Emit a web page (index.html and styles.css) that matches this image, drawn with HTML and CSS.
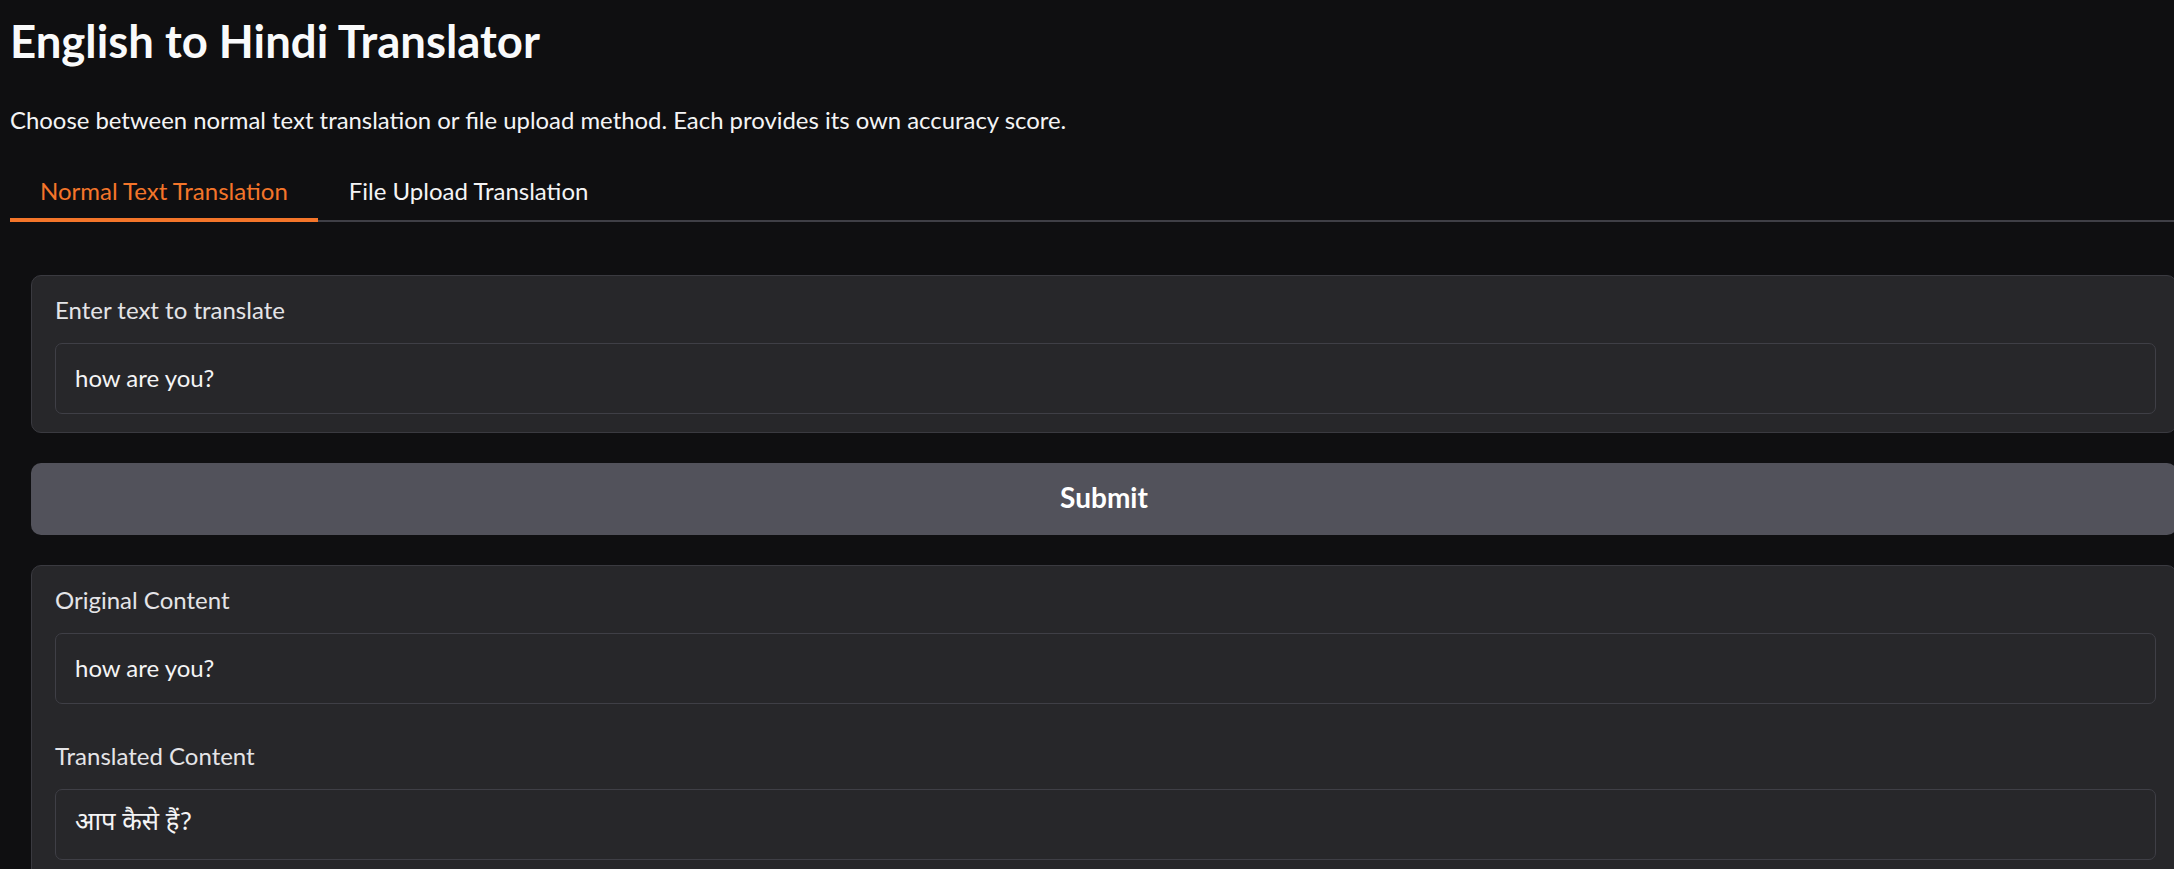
FILE: index.html
```html
<!DOCTYPE html>
<html lang="en">
<head>
<meta charset="utf-8">
<title>English to Hindi Translator</title>
<link rel="stylesheet" href="styles.css">
</head>
<body>
<div class="app">
  <h1 class="title">English to Hindi Translator</h1>
  <p class="subtitle">Choose between normal text translation or file upload method. Each provides its own accuracy score.</p>
  <nav class="tabs">
    <button class="tab active">Normal Text Translation</button>
    <button class="tab">File Upload Translation</button>
  </nav>
  <div class="panel">
    <div class="card">
      <div class="field">
        <label class="label">Enter text to translate</label>
        <div class="box">how are you?</div>
      </div>
    </div>
    <button class="submit">Submit</button>
    <div class="card">
      <div class="field">
        <label class="label">Original Content</label>
        <div class="box">how are you?</div>
      </div>
      <div class="field">
        <label class="label">Translated Content</label>
        <div class="box hindi">आप कैसे हैं?</div>
      </div>
    </div>
  </div>
</div>
</body>
</html>
```

FILE: styles.css
```css
html, body {
  margin: 0;
  padding: 0;
  background: #0f0f11;
  overflow: hidden;
  height: 100%;
}
body {
  font-family: Lato, "Noto Sans", "Noto Sans Devanagari", sans-serif;
  color: #f4f4f5;
}
.app {
  padding-left: 10px;
}
.title {
  margin: 14px 0 0;
  font-size: 45.5px;
  line-height: 1.2;
  font-weight: 700;
  color: #f9fafb;
}
.subtitle {
  margin: 33.5px 0 0;
  font-size: 23.9px;
  line-height: 1.5;
  color: #f4f4f5;
}
.tabs {
  display: flex;
  margin-top: 35px;
  border-bottom: 2px solid #3f3f46;
}
.tab {
  font-family: inherit;
  font-size: 24px;
  line-height: 1.5;
  color: #f4f4f5;
  background: none;
  border: none;
  border-bottom: 4px solid transparent;
  margin-bottom: -2px;
  padding: 0 30px 9px;
  cursor: pointer;
}
.tab + .tab {
  padding-left: 31px;
}
.tab.active {
  color: #f4752a;
  border-bottom-color: #f4752a;
}
.panel {
  display: flex;
  flex-direction: column;
  gap: 30px;
  padding: 53px 0 0 21px;
  margin-right: -3px;
}
.card {
  display: flex;
  flex-direction: column;
  gap: 34px;
  background: #27272a;
  border: 1px solid #3a3a40;
  border-radius: 10px;
  padding: 16px 20px 18px 23px;
}
.field {
  display: flex;
  flex-direction: column;
  gap: 15px;
}
.label {
  font-size: 24px;
  line-height: 1.5;
  color: #e4e4e7;
}
.box {
  background: #27272a;
  border: 1px solid #3f3f46;
  border-radius: 7px;
  padding: 16px 19px 17px;
  font-size: 24px;
  line-height: 1.5;
  color: #f4f4f5;
}
.hindi {
  font-family: "Noto Sans Devanagari", "Lohit Devanagari", "Noto Sans", sans-serif;
  font-size: 25.5px;
  line-height: 35px;
  padding-top: 16px;
  padding-bottom: 18px;
}
.submit {
  font-family: inherit;
  font-size: 28px;
  font-weight: 700;
  line-height: 36px;
  color: #ffffff;
  background: #52525b;
  border: none;
  border-radius: 10px;
  padding: 16px 0 20px;
  width: 100%;
}
```
